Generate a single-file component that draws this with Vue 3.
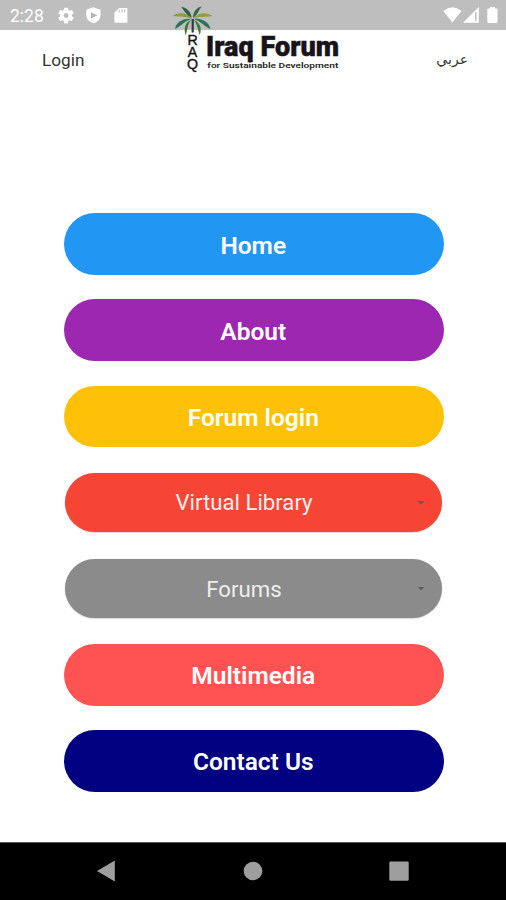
<script setup>
const items = [
  { label: 'Home', tone: 'blue' },
  { label: 'About', tone: 'purple' },
  { label: 'Forum login', tone: 'amber' },
  { label: 'Virtual Library', tone: 'red', menu: true },
  { label: 'Forums', tone: 'grey', menu: true },
  { label: 'Multimedia', tone: 'coral' },
  { label: 'Contact Us', tone: 'navy' },
]
</script>

<template>
  <div class="screen">
    <div class="status">
      <span class="time">2:28</span>
      <svg class="left-icons" width="76" height="30" viewBox="56 0 76 30">
        <g fill="#fff">
          <g transform="translate(56.2 5.7) scale(.82)">
            <path d="M19.14 12.94c.04-.3.06-.61.06-.94s-.02-.64-.07-.94l2.03-1.58a.5.5 0 0 0 .12-.61l-1.92-3.32a.49.49 0 0 0-.59-.22l-2.39.96a7 7 0 0 0-1.62-.94l-.36-2.54a.48.48 0 0 0-.48-.41h-3.84a.47.47 0 0 0-.47.41l-.36 2.54a7.4 7.4 0 0 0-1.62.94l-2.39-.96a.48.48 0 0 0-.59.22L2.74 8.87a.47.47 0 0 0 .12.61l2.03 1.58a6 6 0 0 0 0 1.88l-2.03 1.58a.5.5 0 0 0-.12.61l1.92 3.32c.12.22.37.29.59.22l2.39-.96c.5.38 1.03.7 1.62.94l.36 2.54c.05.24.24.41.48.41h3.84c.24 0 .44-.17.47-.41l.36-2.54a7 7 0 0 0 1.62-.94l2.39.96c.22.08.47 0 .59-.22l1.92-3.32a.5.5 0 0 0-.12-.61zM12 15a3 3 0 1 1 0-6 3 3 0 0 1 0 6z" />
          </g>
          <path d="M93.5 7.2 100.5 9.8V15.2C100.5 19 97.6 22 93.5 23.3 89.4 22 86.3 19 86.3 15.2V9.8Z" />
          <path d="M119.3 8H126.2Q127.4 8 127.4 9.2V21.6Q127.4 22.8 126.2 22.8H115.6Q114.4 22.8 114.4 21.6V12.8Z" />
        </g>
        <path d="M91 12.2 97.5 15.3 91 18.4Z" fill="#b6b6b6" />
        <path d="M119.3 9.4v3M122 9.4v3M124.7 9.4v3" stroke="#c6c6c6" stroke-width="1.2" />
      </svg>
      <svg class="right-icons" width="60" height="30" viewBox="440 0 60 30">
        <path d="M443.3 11Q452.4 3.6 461.5 11L452.4 22.6Z" fill="#fff" />
        <path d="M478.8 7V22.8H463Z" fill="#fff" />
        <path d="M475.8 12V21" stroke="#c4c4c4" stroke-width="1.5" />
        <path d="M490 7H494.8V8.6H496.3Q497.5 8.6 497.5 9.8V21.6Q497.5 22.9 496.3 22.9H488.5Q487.3 22.9 487.3 21.6V9.8Q487.3 8.6 488.5 8.6H490Z" fill="#fff" />
      </svg>
    </div>

    <header class="header">
      <a class="login">Login</a>
      <a class="lang" lang="ar" dir="rtl">عربي</a>
      <svg class="logo" width="180" height="76" viewBox="170 0 180 76">
        <path d="M191.500 18C187.500 16 184.500 11.500 181.300 7 186.500 7.500 191.500 12 191.500 18Z" fill="#315f45" />
        <path d="M193 18C193 12.500 196 7.500 201.500 6.500 199 10 197.500 15 193 18Z" fill="#39694b" />
        <path d="M191.500 18.500C186 16 180 17.500 172.700 15.800 178 11.800 187.500 12.500 191.500 18.500Z" fill="#8a9f35" />
        <path d="M193.500 18.500C198 12.500 206 11.500 212.500 16 206 17.500 199 16 193.500 18.500Z" fill="#8fa32f" />
        <path d="M191.500 19C185 20.500 182 25.500 175 29 176 22 184 17.500 191.500 19Z" fill="#28745b" />
        <path d="M193.500 19C200 20.500 203 25.500 210.500 29 209 22 201 17.500 193.500 19Z" fill="#28745b" />
        <path d="M191 20C187.500 24.500 187.500 30 185.800 35.500 183.300 29 185 22.500 191 20Z" fill="#3f783d" />
        <path d="M194 20C197.500 24.500 197.700 30 199.800 35 202.300 28.500 200 22.500 194 20Z" fill="#3f783d" />
        <path d="M191.600 19H193.800V32.500H191.600Z" fill="#303b38" />
        <g class="vertical">
          <text x="192.600" y="44.500">R</text>
          <text x="192.600" y="56.900">A</text>
          <text x="192.600" y="69">Q</text>
        </g>
        <text class="brand" x="206" y="55.500" textLength="133" lengthAdjust="spacingAndGlyphs">Iraq Forum</text>
        <text class="tagline" x="207.300" y="68" textLength="131" lengthAdjust="spacingAndGlyphs">for Sustainable Development</text>
      </svg>
    </header>

    <main class="menu">
      <div v-for="item in items" :key="item.label" class="slot">
        <button class="pill" :class="[item.tone, { select: item.menu }]">
          <span>{{ item.label }}</span>
          <svg v-if="item.menu" class="caret" width="8" height="4" viewBox="0 0 8 4">
            <path d="M.7 0H7.300L4 3.600Z" />
          </svg>
        </button>
      </div>
    </main>

    <nav class="navbar">
      <svg width="22" height="22" viewBox="0 0 22 22"><path d="M2 11 19.800.500V21.500Z" /></svg>
      <svg width="22" height="22" viewBox="0 0 22 22"><circle cx="11" cy="11" r="9.300" /></svg>
      <svg width="22" height="22" viewBox="0 0 22 22"><rect x="1.300" y="1.500" width="19.400" height="19.200" rx="1.200" /></svg>
    </nav>
  </div>
</template>

<style>
body {
  margin: 0;
  background: #fff;
}
</style>

<style scoped>
.screen {
  position: relative;
  display: flex;
  flex-direction: column;
  width: 506px;
  height: 900px;
  overflow: hidden;
  background: #fff;
  font-family: Roboto, "Liberation Sans", sans-serif;
}
.status {
  display: flex;
  align-items: center;
  height: 30px;
  padding: 0 6px 0 10px;
  background: #bebebe;
}
.time {
  width: 46px;
  color: #fff;
  font-size: 17.5px;
  line-height: 30px;
  padding-top: 2px;
}
.right-icons {
  margin-left: auto;
}
.header {
  display: flex;
  justify-content: space-between;
  height: 59px;
  padding: 0 38px 0 42px;
  color: #333;
  font-size: 17.2px;
  line-height: 60px;
}
.lang {
  font-family: "DejaVu Sans", sans-serif;
  font-size: 14px;
  line-height: 58px;
}
.logo {
  position: absolute;
  left: 170px;
  top: 0;
}
.vertical {
  fill: #151515;
  font: 500 14.200px "Liberation Sans", sans-serif;
  text-anchor: middle;
  stroke: #151515;
  stroke-width: 0.4px;
}
.brand {
  fill: #18151a;
  stroke: #18151a;
  stroke-width: 0.5px;
  font: 900 27px Roboto, "Liberation Sans", sans-serif;
}
.tagline {
  fill: #252525;
  font: 600 7.500px Roboto, "Liberation Sans", sans-serif;
}
.menu {
  flex: 1;
  padding: 112px 62.500px 0 64px;
}
.slot {
  display: flex;
  align-items: center;
  justify-content: center;
  height: 86.150px;
}
.pill {
  display: flex;
  align-items: center;
  justify-content: center;
  position: relative;
  box-sizing: border-box;
  width: 100%;
  height: 61.500px;
  padding: 2px 1px 0 0;
  border: 0;
  border-radius: 31px;
  color: #fff;
  font: 600 24.500px Roboto, "Liberation Sans", sans-serif;
}
.select {
  width: 377px;
  height: 58.500px;
  padding: 0 19.500px 0 0;
  font-size: 22.200px;
  font-weight: 400;
  color: #fff0f0;
  box-shadow: 0 0.500px 1.500px #bbb;
}
.blue { background: #2196f3; }
.purple { background: #9c27b0; }
.amber { background: #ffc107; }
.red { background: #f64435; }
.grey { background: #8b8b8b; color: #eee; }
.coral { background: #ff5252; }
.navy { background: #000080; }
.caret {
  position: absolute;
  right: 17.500px;
  top: 28px;
  fill: #5d5d5d;
}
.navbar {
  display: flex;
  align-items: center;
  justify-content: space-between;
  box-sizing: border-box;
  height: 58.500px;
  padding: 0 96px 0 95px;
  border-top: 1px solid #555;
  background: #000;
}
.navbar svg {
  fill: #9e9e9e;
}
</style>
